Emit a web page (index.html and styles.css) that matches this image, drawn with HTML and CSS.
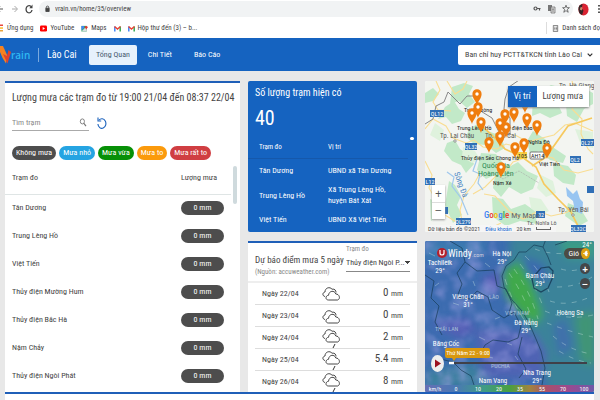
FILE: index.html
```
<!DOCTYPE html>
<html lang="vi">
<head>
<meta charset="utf-8">
<title>Vrain - Lào Cai</title>
<link rel="stylesheet" href="styles.css">
</head>
<body>
<div class="browser">
  <div class="toolbar">
    <svg class="arrows" viewBox="0 0 36 18" aria-hidden="true"><path d="M0 9h3M0 6.500l-2 2.500 2 2.500" fill="none" stroke="#555"/><path d="M12 9h5M14.500 6l3 3-3 3" fill="none" stroke="#aaa"/><path d="M31.500 7.200A3 3.600 0 1 0 32 10" fill="none" stroke="#444" stroke-width="1.300"/><path d="M32.500 4.500v3.800h-3.200z" fill="#444"/></svg>
    <div class="address">
      <svg class="lock" viewBox="0 0 6 8" aria-hidden="true"><path d="M1 3h4v4H1z" fill="#444" stroke="#444"/><path d="M1.500 3V2a1.500 1.500 0 0 1 3 0v1" fill="none" stroke="#444"/></svg>
      <input class="url" aria-label="Địa chỉ" value="vrain.vn/home/35/overview">
      <svg class="tools" viewBox="0 0 38 10" aria-hidden="true"><circle cx="2.500" cy="4.500" r="1.500" fill="none" stroke="#555" stroke-width="1.200"/><path d="M4 4.500h3.500M6.500 4.500v2" stroke="#555" stroke-width="1.200"/><path d="M15 1h4v6h-4z" fill="#777"/><path d="M18 3h4v6h-4z" fill="#ddd" stroke="#666" stroke-width=".7"/><path d="M19 5h2m-1 0v3" stroke="#555" stroke-width=".6"/><path d="M33 1.200l.9 2.500h2.500l-2 1.700.8 2.900-2.200-1.700-2.200 1.700.8-2.900-2-1.700h2.500z" fill="none" stroke="#555" stroke-width=".8"/></svg>
    </div>
    <svg class="avatar" viewBox="0 0 12 14" aria-hidden="true"><ellipse cx="6" cy="7" rx="5.500" ry="6.500" fill="#d92332"/><path d="M5 1Q0 2 .5 7t4 6L6 8 4 6z" fill="#352426"/><path d="M3 4l2 1-1 3-2-1z" fill="#c78c6c"/></svg>
    <svg class="dots" viewBox="0 0 4 10" aria-hidden="true"><path d="M1 1h2v1.500H1zM1 4.300h2v1.500H1zM1 7.600h2v1.500H1z" fill="#555"/></svg>
  </div>
  <nav class="bookmarks" aria-label="Dấu trang">
    <svg class="apps" viewBox="0 0 4 8" aria-hidden="true"><path d="M0 .5h3v1.500H0z" fill="#e8453c"/><path d="M0 3.300h3v1.500H0z" fill="#f9bb2d"/><path d="M0 6h3v1.500H0z" fill="#e8a33c"/></svg>
    <a href="#">Ứng dụng</a>
    <a href="#" class="yt"><svg viewBox="0 0 7 7" aria-hidden="true"><rect y=".5" width="7" height="6" rx="1.300" fill="#f00"/><path d="M2.700 2l2.300 1.500L2.700 5z" fill="#fff"/></svg>YouTube</a>
    <a href="#" class="maps"><svg viewBox="0 0 7 8" aria-hidden="true"><path d="M0 1h6v6.500H0z" fill="#34a866"/><path d="M0 7.500l6-6v6z" fill="#d8dde2"/><path d="M0 1h3v2.500L0 6z" fill="#4285f4"/><path d="M5.500 5L4 2.500a1.500 1.500 0 1 1 3 0z" fill="#dd3b30"/></svg>Maps</a>
    <a href="#" class="gm" aria-label="Gmail"><svg viewBox="0 0 7 6" aria-hidden="true"><path d="M.8 6V1" stroke="#4285f4" stroke-width="1.500"/><path d="M6.200 6V1" stroke="#34a853" stroke-width="1.500"/><path d="M.5 1l3 2.500L6.500 1" fill="none" stroke="#ea4335" stroke-width="1.500"/></svg></a>
    <a href="#" class="inbox"><svg viewBox="0 0 7 6" aria-hidden="true"><path d="M.8 6V1" stroke="#4285f4" stroke-width="1.500"/><path d="M6.200 6V1" stroke="#34a853" stroke-width="1.500"/><path d="M.5 1l3 2.500L6.500 1" fill="none" stroke="#ea4335" stroke-width="1.500"/></svg>Hộp thư đến (3) – b...</a>
    <a href="#" class="reading"><svg viewBox="0 0 6 8" aria-hidden="true"><path d="M.5.5h5v7h-5zM1.500 2.500h1m.5 0h2M1.500 4h1m.5 0h2M1.500 5.500h1m.5 0h2" fill="none" stroke="#555" stroke-width=".8"/></svg>Danh sách đọ</a>
  </nav>
</div>

<header class="appbar">
  <a class="logo" href="#"><svg viewBox="0 0 11 19" aria-hidden="true"><path d="M0 1h3l4.500 10L6 18.500Q2 13 0 7z" fill="#f58220"/><path d="M3 9l4.500 9.500L11 7 8.500 5 7 11z" fill="#e2422c"/></svg><span>rain</span></a>
  <span class="province">Lào Cai</span>
  <nav class="menu">
    <a href="#" class="active">Tổng Quan</a>
    <a href="#">Chi Tiết</a>
    <a href="#">Báo Cáo</a>
  </nav>
  <button class="account" type="button">Ban chỉ huy PCTT&amp;TKCN tỉnh Lào Cai<svg viewBox="0 0 6 4" aria-hidden="true"><path d="M.7.700L3 3 5.300.7" fill="none" stroke="#333" stroke-width="1.200"/></svg></button>
</header>

<main class="dashboard">
  <section class="card rain">
    <h2>Lượng mưa các trạm đo từ 19:00 21/04 đến 08:37 22/04</h2>
    <div class="search">
      <label class="field"><input type="text" placeholder="Tìm trạm" aria-label="Tìm trạm"><svg viewBox="0 0 8 10" aria-hidden="true"><ellipse cx="3.300" cy="3.800" rx="2.300" ry="2.800" fill="none" stroke="#777"/><path d="M5 6l2.300 3" stroke="#777" stroke-width="1.300"/></svg></label>
      <button class="reload" type="button" aria-label="Tải lại"><svg viewBox="0 0 10 12" aria-hidden="true"><path d="M2 3.200A4 4.800 0 1 1 .9 7" fill="none" stroke="#1b62bd" stroke-width="1.100"/><path d="M1 .5v3.500h3.200" fill="none" stroke="#1b62bd" stroke-width="1.100"/></svg></button>
    </div>
    <div class="chips">
      <span class="chip none">Không mưa</span><span class="chip light">Mưa nhỏ</span><span class="chip mid">Mưa vừa</span><span class="chip big">Mưa to</span><span class="chip huge">Mưa rất to</span>
    </div>
    <div class="scroller">
      <table class="stations">
        <thead><tr><th>Trạm đo</th><th class="amount">Lượng mưa</th></tr></thead>
        <tbody>
          <tr><td>Tân Dương</td><td class="amount"><span class="pill">0 mm</span></td></tr>
          <tr><td>Trung Lèng Hồ</td><td class="amount"><span class="pill">0 mm</span></td></tr>
          <tr><td>Việt Tiến</td><td class="amount"><span class="pill">0 mm</span></td></tr>
          <tr><td>Thủy điện Mường Hum</td><td class="amount"><span class="pill">0 mm</span></td></tr>
          <tr><td>Thủy điện Bắc Hà</td><td class="amount"><span class="pill">0 mm</span></td></tr>
          <tr><td>Nậm Chảy</td><td class="amount"><span class="pill">0 mm</span></td></tr>
          <tr><td>Thủy điện Ngòi Phát</td><td class="amount"><span class="pill">0 mm</span></td></tr>
        </tbody>
      </table>
      <span class="thumb"></span>
    </div>
  </section>

  <section class="card count">
    <h2>Số lượng trạm hiện có</h2>
    <p class="total">40</p>
    <span class="thumb"></span>
    <table>
      <thead><tr><th>Trạm đo</th><th>Vị trí</th></tr></thead>
      <tbody>
        <tr><td>Tân Dương</td><td>UBND xã Tân Dương</td></tr>
        <tr class="double"><td>Trung Lèng Hồ</td><td>Xã Trung Lèng Hồ,<br>huyện Bát Xát</td></tr>
        <tr><td>Việt Tiến</td><td>UBND Xã Việt Tiến</td></tr>
      </tbody>
    </table>
  </section>

  <section class="card map">
    <svg class="canvas" viewBox="0 0 169 151" preserveAspectRatio="xMidYMid slice" role="img" aria-label="Bản đồ trạm đo">
      <defs><g id="pin"><path d="M0 0C-1-4-4.600-6.500-4.600-11a4.600 4.800 0 0 1 9.200 0C4.600-6.500 1-4 0 0z"/><circle cy="-11" r="1.700" fill="#fff"/></g></defs>
      <rect width="169" height="151" fill="#f3f5f1"/>
      <g fill="#c2e9c8">
        <path d="M27 6l12-4 9 3-4 8 6 8-8 6-8-7-9 3z"/><path d="M20 26l9-6 5 8 6 4-4 8-9 3-6-7-8 2z"/><path d="M44 48l10-6 9 8 13 5 4 12-9 5-10-8-12-1-8-7z"/><path d="M22 62l8-3 5 9 10 7 4 8-8 9-5-8-9-4-8-10z"/><path d="M56 72l15 1 7 9 10 5-6 10-12-3-9 4-9-9z"/><path d="M70 95l10-7 13-7 9 9 11 5-5 13-12 5-12-7-8 10-8-9z"/><path d="M24 100l6 4 6 11-4 9 5 10-9 8-8-18z"/><path d="M67 116l11 2 8 10 14-5 10 7 2 13-17-3-14 5-13-9z"/><path d="M108 15l18-11 12 3-6 14 5 11-12 5-10-5-8 3z"/><path d="M140 13l15-8 13 7v11l-9 5-7 13-10-6z"/><path d="M102 60l6-10 12 8 9 9 12 8-3 7-13-3-11-9-9 3z"/><path d="M128 82l15 3 8 9-2 10-11-2-9-7z"/><path d="M143 122l12 5 8 13-9 5-14-10z"/><path d="M0 12l8-5 6 6-6 7-8 2z"/><path d="M5 118l8 3 2 12-9 7z"/>
      </g>
      <g fill="#dff2dd"><path d="M38 66l12 4 5 8-8 4-10-6z"/><path d="M116 94l12 6 3 12-10 4-9-9z"/><path d="M150 48l18 3v16l-12-3z"/><path d="M10 42l9 7-4 11-10-6z"/><path d="M104 116l12 2 8 12-9 5-9-8z"/></g>
      <g fill="none" stroke="#f9dd92" stroke-width="1.100">
        <path d="M0 48l8-10 13 7 7 12 13 5 8-3 9 7 14 2 9-5 12 3 9-3"/><path d="M0 80l7 14-3 13 7 12 9 15 13 8 5 9"/><path d="M11 0l4 9-7 12 5 8 13 1"/><path d="M22 0l8 13 8-5 4-8"/><path d="M55 92l-6 11-10 12-4 14 4 22"/><path d="M48 113l12-7 11-11 10-5 7-9 15-5"/><path d="M59 113l11 2 14 15 14 8 15-8 13 5 14-3 11-5"/><path d="M90 54l13 7 14-4 12-3 11-10 10-2 18 8"/><path d="M110 72l18 5 11 12 14 3 15-4"/><path d="M147 0l5 14-5 14 10 10-1 15 7 15 5 5"/><path d="M40 151l14-6 12 2 10-5"/>
      </g>
      <g fill="none" stroke="#f6c95f" stroke-width="1.700"><path d="M58 46l11 10 11 12 17 8 14 10 8 17 14 15 13 13 10 20"/><path d="M107 85l14-9 22-31 24-8"/></g>
      <path d="M0 43l8-5 3-13 8-4 4-10 12 12 7-8 9 0 3 14 13 8 7 14 11 3V37l-6-9 1-10 4-12 13-9 16 0 10-4" fill="none" stroke="#888"/>
      <path d="M52 78l-4 12 7 3-2 9 5 7M22 91l7 5-2 9 9 12 7 17" fill="none" stroke="#9fc8ed" stroke-width="1.200"/>
      <path d="M141 106l7 7 4-4 3 9 3 3-1 12-7-3-2-10-6-5z" fill="#98c5f1"/>
      <path d="M55 96l13-4 10 6 16-8 20 12" fill="none" stroke="#aaa" stroke-width=".6" stroke-dasharray="2 1"/>
      <g class="road"><path d="M5 29h14v7H5zM40 62h12v7H40zM156 58h13v7h-13zM145 75h11v7h-11zM0 97h10v7H0zM16 126h7v7h-7zM31 137h15v7H31zM111 130h9v7h-9zM162 105h7v7h-7zM146 144h15v7h-15z"/></g>
      <g class="roadtext"><text x="12" y="35">QL12</text><text x="46" y="68">QL32</text><text x="162" y="64">QL27</text><text x="150" y="81">QL2</text><text x="5" y="103">L12</text><text x="38" y="143">QL279</text><text x="116" y="136">32</text><text x="153" y="150">QL32C</text></g>
      <path d="M92 71h10v7H92z" fill="#f8d447"/><text class="poi small" x="93" y="77">105</text>
      <rect x="105" y="71" width="14" height="7" rx="1" fill="#fff" stroke="#555" stroke-width=".8"/><text class="poi small" x="106" y="77">AH14</text>
      <g class="city"><text x="15" y="57">Tp. Lai Châu</text><text x="60" y="57">Tp. Lào Cai</text><text x="134" y="7">Tp. Hà Giang</text><text x="133" y="131">Tp. Yên Bái</text></g>
      <text class="poi dim" x="102" y="144">Tx. Nghĩa Lộ</text>
      <g class="park"><text x="57" y="87">Quốc gia</text><text x="53" y="95">Hoàng Liên</text></g>
      <text class="river" transform="translate(29 92) rotate(70)">Sông Đà</text>
      <g class="poi"><text x="39" y="31">Trịnh Tường</text><text x="32" y="49">Trung Lèng Hồ</text><text x="74" y="49">Thủy điện Bảo Hà</text><text x="103" y="63">Nghĩa Đô</text><text x="36" y="79">Thủy điện Sẻo Chong Hô</text><text x="114" y="85">Việt Tiến</text><text x="68" y="104">Nậm Xé</text></g>
      <circle cx="30" cy="60" r="1.200" fill="#fff" stroke="#555" stroke-width=".6"/><circle cx="148" cy="134" r="1.200" fill="#fff" stroke="#555" stroke-width=".6"/>
      <g fill="#ef7d0e"><use href="#pin" x="52" y="24"/><use href="#pin" x="53" y="37"/><use href="#pin" x="47" y="43"/><use href="#pin" x="56" y="52"/><use href="#pin" x="100" y="32"/><use href="#pin" x="80" y="44"/><use href="#pin" x="89" y="42"/><use href="#pin" x="102" y="48"/><use href="#pin" x="75" y="53"/><use href="#pin" x="81" y="57"/><use href="#pin" x="112" y="55"/><use href="#pin" x="75" y="66"/><use href="#pin" x="64" y="72"/><use href="#pin" x="90" y="77"/><use href="#pin" x="99" y="73"/><use href="#pin" x="122" y="78"/><use href="#pin" x="76" y="97"/></g>
      <text class="google" x="59" y="137"><tspan fill="#4285f4">G</tspan><tspan fill="#ea4335">o</tspan><tspan fill="#fbbc05">o</tspan><tspan fill="#4285f4">g</tspan><tspan fill="#34a853">l</tspan><tspan fill="#ea4335">e</tspan><tspan class="mymaps" dx="2">My Maps</tspan></text>
    </svg>
    <div class="switch"><button type="button" class="on">Vị trí</button><button type="button">Lượng mưa</button></div>
    <div class="zoom"><button type="button" aria-label="Phóng to">+</button><button type="button" aria-label="Thu nhỏ">−</button></div>
    <div class="credit"><span>Dữ liệu bản đồ ©2021</span><a href="#">Điều khoản</a><span>20 km</span><i></i></div>
  </section>

  <section class="card forecast">
    <div class="head">
      <div><h2>Dự báo điểm mưa 5 ngày</h2><p>(Nguồn: accuweather.com)</p></div>
      <div class="picker"><label for="station">Trạm đo</label><select id="station"><option>Thủy điện Ngòi P...</option></select></div>
    </div>
    <svg class="symbols" aria-hidden="true"><defs><g id="cloud" fill="#fff" stroke="#333" stroke-width=".9" stroke-linejoin="round"><path d="M3 10.500C.2 10 .2 6.500 3 6 3 1.500 8 .5 10 3.200c3-.6 4 1.500 4 3.300"/><path d="M6.500 14C3 14 3.300 9.500 6.500 9.300 7 4.500 12.500 4 13.800 8c3.500-.2 5.200 5 1.700 6z"/></g></defs></svg>
    <ul class="days">
      <li><span>Ngày 22/04</span><svg viewBox="0 0 19 21" aria-hidden="true"><use href="#cloud" y="3"/></svg><b>0 <small>mm</small></b></li>
      <li><span>Ngày 23/04</span><svg viewBox="0 0 19 21" aria-hidden="true"><use href="#cloud" y="4"/></svg><b>0 <small>mm</small></b></li>
      <li><span>Ngày 24/04</span><svg viewBox="0 0 19 21" aria-hidden="true"><use href="#cloud" y="1"/><path d="M13 17l-2 4" stroke="#333"/></svg><b>2 <small>mm</small></b></li>
      <li><span>Ngày 25/04</span><svg viewBox="0 0 19 21" aria-hidden="true"><use href="#cloud" y="1"/><path d="M13 17l-2 4" stroke="#333"/></svg><b>5.4 <small>mm</small></b></li>
      <li><span>Ngày 26/04</span><svg viewBox="0 0 19 21" aria-hidden="true"><use href="#cloud" y="1"/><path d="M13 17l-2 4" stroke="#333"/></svg><b>8 <small>mm</small></b></li>
    </ul>
  </section>

  <section class="card wind">
    <svg class="canvas" viewBox="0 0 169 151" preserveAspectRatio="xMidYMid slice" role="img" aria-label="Bản đồ gió">
      <defs>
        <filter id="soft" x="-30%" y="-30%" width="160%" height="160%"><feGaussianBlur stdDeviation="4"/></filter>
        <filter id="mottle" x="0" y="0" width="100%" height="100%"><feTurbulence type="fractalNoise" baseFrequency=".07" numOctaves="3" seed="4"/><feColorMatrix result="n" values="0 0 0 0 .35  0 0 0 0 .35  0 0 0 0 .76  2.200 0 0 0 -.9"/><feComposite in="n" in2="SourceGraphic" operator="in"/><feGaussianBlur stdDeviation=".8"/></filter>
        <linearGradient id="scale"><stop offset="0" stop-color="#6670b4"/><stop offset=".18" stop-color="#4a78b4"/><stop offset=".35" stop-color="#3f9c86"/><stop offset=".5" stop-color="#49a040"/><stop offset=".62" stop-color="#a08440"/><stop offset=".72" stop-color="#a8506a"/><stop offset=".85" stop-color="#9a4a90"/><stop offset="1" stop-color="#6e5aa8"/></linearGradient>
      </defs>
      <rect width="169" height="151" fill="#3c6cb0"/>
      <g filter="url(#soft)">
        <path d="M85-5h90v160h-50l-12-50-30-50z" fill="#3a8399"/>
        <path d="M0 0h60v12L0 20z" fill="#3a7cb0"/><path d="M58 35l22-5-5 24-17-8zM5 82l38-5 8 12-16 9z" fill="#555fb6"/>
        <path d="M78 30l16-10 14 25 10 30-8 8-16-12-14-18z" fill="#3fa94c"/>
        <path d="M98 15l20 8 8 20-12-4-12-8z" fill="#3a67b0"/>
        <path d="M132-3h40v20h-30z" fill="#3a9c86"/><path d="M128 85l12-8 8 28-14 12z" fill="#3f70ac"/>
        <path d="M150 75l20-5v55l-14-4z" fill="#3f9575"/><path d="M50 88l60 4 12 20-5 24-60 2z" fill="#4f64b4"/>
        <path d="M0 130l50-8 18 25H0z" fill="#3b7f9f"/>
      </g>
      <path d="M0 0h84l-7 40 14 28 22 35 1 47H0z" filter="url(#mottle)" opacity=".55"/>
      <g fill="none" stroke="#d9efe9" stroke-width=".6" opacity=".6">
        <path d="M84 32q14 20 24 48M89 28q16 22 24 50M95 23q14 18 24 45M80 38q8 25 20 42M100 15q17 16 24 36" stroke-dasharray="6 7"/>
        <path d="M110 8q20 8 50 2M125 60q18 6 40-4M120 70q22 10 48 4M122 82q20 8 46 14M128 95q16 14 38 18M134 110q16 10 32 12M136 28q16 5 30-6M132 46q20 0 35-10" stroke-dasharray="5 6"/>
        <path d="M4 12l6 3M20 20l5 1M40 12l5 3M10 45l4-3M28 62l6 2M60 22l5 4M48 40l2 5M70 78l5-2M54 96l6 3M20 100l4 2M35 110l5 3M82 102l5 2M90 115l3 4M64 116l4 1" />
      </g>
      <g fill="none" stroke="#173b56" stroke-width=".8" opacity=".85">
        <path d="M121-2l-3 8-9-2-8 7-7 0-5 8-8 6-4 10 2 11 8 13 10 11 7 12 7 16 5 12 4 17-3 17-8 9-12 8"/><path d="M110 34l6-7 8-1 4 4-1 8-4 9-7 4-7-4-2-9z" stroke-width="1.200"/><path d="M118 6l5 10 3 8M130 4l12-4"/>
        <path d="M25 0l12 7 3 14 12 9 17-1 3 16 9 3 6 14-4 13"/><path d="M40 21l-8 11 5 11-5 13 13 2 7-8 11 6 4 13 12 8 10-6 7 14-3 12-10 4-15-2-8 5-7 13"/><path d="M0 34l9 6-3 17 8 8-4 16 7 13M97 96l-4 17 8 15-7 9M15 118l13 3 8 8 10 6 4 12"/>
      </g>
      <g class="land"><text x="10" y="90">THÁI LAN</text><text x="80" y="74">VIỆT NAM</text><text x="64" y="58">LÀO</text><text x="66" y="127">PUCHIA</text></g>
      <g class="place"><text x="15" y="24">Tachileik</text><text x="15" y="32">29°</text><text x="77" y="15">Hà Nội</text><text x="77" y="23">29°</text><text x="115" y="37">Đam Châu</text><text x="115" y="45">29°</text><text x="43" y="58">Viêng Chăn</text><text x="43" y="66">31°</text><text x="145" y="74">Hoàng Sa</text><text x="101" y="84">Đà Nẵng</text><text x="101" y="92">29°</text><text x="21" y="105">Băng Cốc</text><text x="112" y="134">Nha Trang</text><text x="112" y="142">29°</text><text x="68" y="142">Nam Vang</text><text x="162" y="6">24°</text></g>
      <circle cx="17" cy="12" r="5" fill="#b4202c"/><path d="M15 9v3a2 2 0 0 0 4 0V9" fill="none" stroke="#fff" stroke-width="1.200"/><text class="windy" x="23" y="16">Windy<tspan class="com">.com</tspan></text>
      <path d="M28 122h134" stroke="#404048" stroke-width="2"/><path d="M24 122h5" stroke="#fff" stroke-width="2.500"/>
      <path d="M22 107h41a2 2 0 0 1 2 2v6a2 2 0 0 1-2 2H31l-2 3-2-3h-5a2 2 0 0 1-2-2v-6a2 2 0 0 1 2-2z" fill="#d9980f"/><text class="when" x="43" y="114">Thứ Năm 22 - 9:00</text>
      <rect y="144" width="169" height="7" fill="url(#scale)"/>
      <g class="unit"><text x="10" y="150">km/h</text><text x="31" y="150">0</text><text x="53" y="150">10</text><text x="74" y="150">20</text><text x="95" y="150">35</text><text x="117" y="150">55</text><text x="138" y="150">70</text><text x="159" y="150">100</text></g>
    </svg>
    <button class="play" type="button" aria-label="Phát"><svg viewBox="0 0 13 17" aria-hidden="true"><ellipse cx="6.500" cy="8.500" rx="6.500" ry="8.500" fill="#eee"/><path d="M4 4.500l6 4-6 4z" fill="#9b1020"/></svg></button>
    <div class="layers"><button type="button" class="gust">Gió<svg viewBox="0 0 9 11" aria-hidden="true"><ellipse cx="4.500" cy="5.500" rx="4.500" ry="5.500" fill="#dda012"/><path d="M2 5.500h5M4 4l2-1v5L4 7z" fill="#fff" stroke="#fff" stroke-width=".7"/></svg></button><button type="button" class="round">+</button><button type="button" class="round">−</button></div>
  </section>
  <section class="card next" aria-label="Tiếp theo"></section>
</main>
</body>
</html>
```
FILE: styles.css
```
* { box-sizing: border-box; }
:root {
  --blue: #1563c0;
  --line: #1f5fb8;
  --text: #444;
  --font: "Roboto Condensed", "Open Sans", sans-serif;
}
body { margin: 0; height: 100vh; overflow: hidden; background: #e8e8e8; color: var(--text); font: 400 8px/12px var(--font); }
h2, p, ul { margin: 0; padding: 0; font-weight: 400; }
h2 { font-size: 10px; line-height: 14px; white-space: nowrap; }
a { color: inherit; text-decoration: none; }
button, input, select { font: inherit; color: inherit; border: 0; padding: 0; margin: 0; background: none; outline: 0; }
table { width: 100%; border-collapse: collapse; table-layout: fixed; }
th { font-weight: 400; text-align: left; padding: 0; }
td { padding: 0; }
svg { display: block; flex: none; }

.browser { background: #fff; font-size: 7px; }
.toolbar { display: flex; align-items: center; height: 18px; }
.arrows { width: 36px; height: 18px; }
.address { flex: 1; display: flex; align-items: center; gap: 5px; height: 16px; margin-left: 3px; padding: 0 2px 0 6px; border-radius: 8px; background: #f1f3f4; }
.lock { width: 5px; height: 8px; }
.url { flex: 1; min-width: 0; }
.tools { width: 38px; height: 10px; }
.avatar { width: 11px; height: 13px; margin: 0 8px 0 5px; }
.dots { width: 4px; height: 10px; margin-right: -1px; }
.bookmarks { display: flex; align-items: center; height: 20px; }
.bookmarks a { display: flex; align-items: center; gap: 3px; white-space: nowrap; }
.bookmarks svg { width: 7px; height: 7px; }
.bookmarks .apps { width: 4px; height: 8px; margin-right: 3px; }
.yt, .maps, .gm, .inbox { margin-left: 7px; }
.bookmarks .reading { margin-left: auto; padding-left: 5px; border-left: 1px solid #ddd; }

.appbar { display: flex; align-items: center; height: 33px; background: var(--blue); color: #fff; }
.logo { display: flex; align-items: center; width: 39px; height: 14px; border-right: 1px solid #7aa9de; font: 600 10px/14px "Open Sans", sans-serif; color: #2fb9f2; }
.logo svg { width: 11px; height: 19px; }
.province { width: 50px; padding-left: 8px; font-size: 10px; }
.menu { display: flex; }
.menu a { padding: 0 11px; line-height: 20px; }
.menu a.active { padding: 0 7px; border-radius: 2px; background: #e6f1fc; color: #46586c; }
.account { display: flex; align-items: center; gap: 5px; height: 20px; margin-left: auto; padding: 0 7px; border-radius: 2px 0 0 2px; background: #fff; color: #444; }
.account svg { width: 6px; height: 4px; }

.dashboard { display: grid; grid-template-columns: 235fr 169fr 169fr; grid-template-rows: 151px 151px auto; gap: 9px 8px; padding: 10px 6px 0 5px; }
.card { position: relative; min-width: 0; overflow: hidden; border-radius: 2px; background: #fff; }

.rain { grid-row: span 2; border-top: 2px solid var(--line); padding: 8px 0 0 7px; border-radius: 0; }
.search { display: flex; align-items: center; gap: 8px; margin: 10px 0 15px; }
.field { display: flex; align-items: center; width: 77px; height: 16px; border-bottom: 1px solid #aaa; }
.field input { flex: 1; min-width: 0; }
.field input::placeholder { color: #888; opacity: 1; }
.field svg { width: 8px; height: 9px; margin-right: 2px; }
.reload svg { width: 10px; height: 12px; }
.chips { display: flex; gap: 3px; }
.chip, .pill { border-radius: 7px; padding: 0 4px; line-height: 14px; color: #fff; white-space: nowrap; text-align: center; }
.none, .pill { background: #4d4d4d; }
.light { background: #25a4e2; }
.mid { background: #079007; }
.big { background: #fb9a0c; }
.huge { background: #d03e42; }
.scroller { position: relative; margin: 2px 9px 0 -7px; }
.stations th { height: 32px; border-bottom: 1px solid #dfe5e5; }
.stations td { height: 28px; }
.stations th:first-child, .stations td:first-child { padding-left: 7px; }
.stations .amount { width: 50px; }
.pill { display: block; width: 43px; }
.thumb { position: absolute; background: #cfdadd; border-radius: 2px; }
.scroller .thumb { top: 4px; right: -6px; width: 4px; height: 38px; }

.count { background: var(--blue); color: #fff; padding: 5px 7px 0; }
.total { margin: 8px 0 9px; font-size: 20px; line-height: 20px; }
.count .thumb { top: 56px; right: 3px; width: 4px; height: 3px; background: #fff; }
.count table { margin-left: -7px; width: 160px; }
.count th { height: 21px; border-bottom: 1px solid #1558ab; font-size: 7px; }
.count td { height: 25px; line-height: 11px; }
.count .double td { height: 24px; }
.count th:first-child, .count td:first-child { width: 50%; padding-left: 11px; }

.canvas { width: 100%; height: 100%; font-family: var(--font); font-weight: 400; }
.road path { fill: #2f6fb6; }
.roadtext { fill: #fff; font-size: 6px; text-anchor: middle; }
.city { font-size: 7px; fill: #555; }
.poi { font-size: 6px; fill: #222; }
.poi.dim { fill: #666; }
.park { font-size: 8px; fill: #2e8b57; }
.river { font-size: 8px; fill: #4a85c4; }
.google { font: 500 9px var(--font); }
.mymaps { font-size: 8px; font-weight: 400; fill: #666; }
.switch { position: absolute; top: 5px; right: 5px; display: flex; background: #fff; box-shadow: 0 1px 2px #888; font-size: 9px; line-height: 21px; }
.switch button { padding: 0 6px; }
.switch .on { background: var(--blue); color: #fff; }
.zoom { position: absolute; left: 7px; bottom: 13px; display: grid; background: #fff; box-shadow: 0 1px 2px #999; }
.zoom button { width: 13px; height: 17px; font: 400 12px/16px "Open Sans", sans-serif; color: #555; }
.zoom button + button { border-top: 1px solid #ddd; }
.credit { position: absolute; left: 3px; bottom: 0; display: flex; align-items: center; gap: 5px; padding-right: 5px; background: #f6f6f6; font-size: 6px; line-height: 7px; }
.credit a { color: #1a6bd0; }
.credit i { width: 15px; height: 3px; border: 1px solid #666; border-top: 0; }

.forecast { border-top: 2px solid var(--line); border-radius: 0; display: flex; flex-direction: column; }
.head { display: flex; justify-content: space-between; height: 41px; padding: 2px 7px 0; border-bottom: 2px solid #eee; }
.head h2 { margin-top: 9px; font-size: 9px; line-height: 13px; }
.head p { font-size: 7px; line-height: 10px; color: #888; }
.picker { width: 64px; font-size: 7px; line-height: 9px; color: #888; }
.picker label { display: block; }
.picker select { display: block; width: 100%; height: 18px; appearance: none; border-bottom: 1px solid #888; font-size: 8px; color: #444; background: linear-gradient(#444, #444) right 1px top 8px / 3px 1px no-repeat, linear-gradient(#444, #444) right 0 top 7px / 5px 1px no-repeat, linear-gradient(#444, #444) right 2px top 9px / 1px 1px no-repeat; }
.symbols { position: absolute; width: 0; height: 0; }
.days { flex: 1; display: flex; flex-direction: column; list-style: none; padding: 0 7px; }
.days li { flex: 1; display: grid; grid-template-columns: 60px 19px 1fr; align-items: center; padding: 0 7px; border-top: 1px solid #ddd; }
.days li:first-child { border-top: 0; }
.days svg { width: 19px; height: 21px; }
.days b { text-align: right; font-weight: 400; font-size: 11px; }
.days small { font-size: 8px; }

.wind { background: #3f6fae; }
.place { fill: #fff; font-size: 7px; text-anchor: middle; }
.land { fill: #a9c0d8; font-size: 6px; }
.windy { fill: #fff; font-size: 10px; }
.com { fill: #ccd; font-size: 6px; }
.when { fill: #fff; font-size: 6px; text-anchor: middle; }
.unit { fill: #fff; font-size: 6px; text-anchor: middle; }
.play { position: absolute; left: 6px; bottom: 20px; }
.play svg { width: 13px; height: 17px; }
.layers { position: absolute; top: 7px; right: 4px; display: grid; gap: 4px; justify-items: end; color: #fff; }
.gust { display: flex; align-items: center; gap: 2px; padding-left: 4px; height: 11px; border-radius: 6px; background: #4c4c44; }
.gust svg { width: 9px; height: 11px; }
.round { width: 10px; height: 11px; border-radius: 50%; background: #44474a; font: 700 10px/10px "Open Sans", sans-serif; }

.next { grid-column: 1 / -1; height: 20px; margin-top: -9px; border-top: 2px solid var(--line); border-radius: 0; }
```
